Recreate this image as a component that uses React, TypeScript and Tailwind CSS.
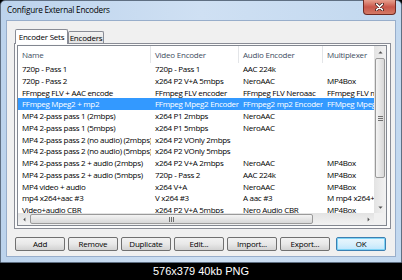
import React from 'react'
import clsx from 'clsx'

const rows = [
  ['720p - Pass 1', '720p - Pass 1', 'AAC 224k', ''],
  ['720p - Pass 2', 'x264 P2 V+A 5mbps', 'NeroAAC', 'MP4Box'],
  ['FFmpeg FLV + AAC encode', 'FFmpeg FLV encoder', 'FFmpeg FLV Neroaac', 'FFmpeg FLV mux'],
  ['FFmpeg Mpeg2 + mp2', 'FFmpeg Mpeg2 Encoder', 'FFmpeg2 mp2 Encoder', 'FFMpeg Mpeg2 mux'],
  ['MP4 2-pass pass 1 (2mbps)', 'x264 P1 2mbps', 'NeroAAC', ''],
  ['MP4 2-pass pass 1 (5mbps)', 'x264 P1 5mbps', 'NeroAAC', ''],
  ['MP4 2-pass pass 2 (no audio) (2mbps)', 'x264 P2 VOnly 2mbps', '', ''],
  ['MP4 2-pass pass 2 (no audio) (5mbps)', 'x264 P2 VOnly 5mbps', '', ''],
  ['MP4 2-pass pass 2 + audio (2mbps)', 'x264 P2 V+A 2mbps', 'NeroAAC', 'MP4Box'],
  ['MP4 2-pass pass 2 + audio (5mbps)', '720p - Pass 2', 'AAC 224k', 'MP4Box'],
  ['MP4 video + audio', 'x264 V+A', 'NeroAAC', 'MP4Box'],
  ['mp4 x264+aac #3', 'V x264 #3', 'A aac #3', 'M mp4 x264+aac'],
  ['Video+audio CBR', 'x264 P2 V+A 5mbps', 'Nero Audio CBR', 'MP4Box'],
]

const headers = ['Name', 'Video Encoder', 'Audio Encoder', 'Multiplexer']
const colW = ['w-[133px]', 'w-[88px]', 'w-[84px]', 'w-[90px]']
const buttons = ['Add', 'Remove', 'Duplicate', 'Edit...', 'Import...', 'Export...']

function Arrow({ dir }: { dir: 'up' | 'down' | 'left' | 'right' }) {
  const pts = {
    up: '0,4 3.5,0.5 7,4',
    down: '0,1 3.5,4.5 7,1',
    left: '4,0 0.5,3.5 4,7',
    right: '1,0 4.5,3.5 1,7',
  }[dir]
  const vert = dir === 'up' || dir === 'down'
  return (
    <div className="flex h-[12px] w-[12px] shrink-0 items-center justify-center">
      <svg width={vert ? 5 : 3} height={vert ? 3 : 5} viewBox={vert ? '0 0 7 5' : '0 0 5 7'}>
        <polygon points={pts} fill="#505050" />
      </svg>
    </div>
  )
}

export default function App() {
  return (
    <div className="flex h-[280px] w-[402px] flex-col bg-black font-['Open_Sans',sans-serif]">
      {/* window frame */}
      <div className="flex h-[263px] flex-col rounded-t-[5px] border border-[#5f6f82] bg-gradient-to-r from-[#bcd3ec] via-[#cfe0f3] to-[#c2d8ef] px-[5px] pb-[5px]">
        <div className="flex h-[19px] shrink-0 justify-between">
          <div className="pl-[1px] pt-[5px] text-[8.2px] leading-none tracking-[-0.2px] text-black">Configure External Encoders</div>
          <div className="-mt-px flex h-[15px] w-[33px] items-center justify-center rounded-b-[4px] border border-t-0 border-[#6e2a22] bg-gradient-to-b from-[#e6a08f] via-[#c8564a] to-[#d47a66]">
            <svg width="9" height="8" viewBox="0 0 9 8">
              <path d="M1.5 1.2 L7.5 6.8 M7.5 1.2 L1.5 6.8" stroke="#3d1410" strokeWidth="3" strokeLinecap="round" />
              <path d="M1.5 1.2 L7.5 6.8 M7.5 1.2 L1.5 6.8" stroke="#ffffff" strokeWidth="1.6" strokeLinecap="round" />
            </svg>
          </div>
        </div>

        {/* client area */}
        <div className="flex flex-1 flex-col border border-[#98aecb] bg-[#f0f0f0] text-[8px] leading-none tracking-[-0.22px]">
          {/* tabs */}
          <div className="relative z-10 mt-[8px] flex h-[14px] items-end pl-[8px]">
            <div className="-mb-px flex h-[15px] w-[53px] items-center justify-center rounded-t-[2px] border border-b-0 border-[#898c95] bg-white text-black">
              Encoder Sets
            </div>
            <div className="flex h-[12px] w-[36px] items-center justify-center rounded-t-[2px] border border-b-0 border-[#898c95] bg-gradient-to-b from-[#f2f2f2] to-[#e3e3e3] text-black">
              Encoders
            </div>
          </div>

          {/* tab panel */}
          <div className="ml-[7px] mr-[4px] flex h-[186px] flex-col border border-[#898c95] bg-[#fbfbfb] pb-[2px] pl-[2px] pr-[3px] pt-px">
            <div className="flex flex-1 flex-col border border-[#828790] bg-white">
              <div className="flex h-[167px]">
                <div className="flex-1 overflow-hidden">
                  <div className="flex h-[17px] items-center whitespace-nowrap text-[#3e4c5e]">
                    {headers.map((h, i) => (
                      <div key={h} className={clsx(colW[i], 'flex h-full shrink-0 items-center border-r border-[#e3e5e8] pl-[4px]')}>
                        {h}
                      </div>
                    ))}
                  </div>
                  {rows.map((r, ri) => (
                    <div
                      key={ri}
                      className={clsx(
                        'flex h-[11.75px] items-center whitespace-nowrap tracking-[-0.3px]',
                        ri === 3 ? 'bg-[#3399ff] text-white' : 'text-black'
                      )}
                    >
                      {r.map((c, ci) => (
                        <div key={ci} className={clsx(colW[ci], 'shrink-0 overflow-hidden pl-[4px] leading-[11.75px]')}>
                          {c}
                        </div>
                      ))}
                    </div>
                  ))}
                </div>
                {/* vertical scrollbar */}
                <div className="flex w-[12px] shrink-0 flex-col bg-gradient-to-r from-[#e3e3e3] to-[#f2f2f2]">
                  <Arrow dir="up" />
                  <div className="mx-px flex h-[120px] items-center justify-center rounded-[2px] border border-[#9a9a9a] bg-gradient-to-r from-[#f4f4f4] to-[#d8d8d8]">
                    <div className="flex flex-col gap-px">
                      <div className="h-px w-[5px] bg-[#707070]" />
                      <div className="h-px w-[5px] bg-[#707070]" />
                      <div className="h-px w-[5px] bg-[#707070]" />
                    </div>
                  </div>
                  <div className="flex-1" />
                  <Arrow dir="down" />
                </div>
              </div>
              {/* horizontal scrollbar */}
              <div className="flex h-[12px]">
                <div className="flex flex-1 bg-gradient-to-b from-[#e3e3e3] to-[#f2f2f2]">
                  <Arrow dir="left" />
                  <div className="my-px flex w-[283px] items-center justify-center rounded-[2px] border border-[#9a9a9a] bg-gradient-to-b from-[#f4f4f4] to-[#d8d8d8]">
                    <div className="flex gap-px">
                      <div className="h-[5px] w-px bg-[#707070]" />
                      <div className="h-[5px] w-px bg-[#707070]" />
                      <div className="h-[5px] w-px bg-[#707070]" />
                    </div>
                  </div>
                  <div className="flex-1" />
                  <Arrow dir="right" />
                </div>
                <div className="w-[12px] bg-[#f0f0f0]" />
              </div>
            </div>
          </div>

          {/* buttons */}
          <div className="mt-[8px] flex h-[14px] pl-[8px]">
            {buttons.map((b, i) => (
              <div
                key={b}
                className={clsx(
                  'flex h-[14px] w-[50px] items-center justify-center rounded-[2px] border border-[#707070] bg-gradient-to-b from-[#f2f2f2] via-[#e8e8e8] to-[#d2d2d2] text-black',
                  i > 0 && 'ml-[3px]'
                )}
              >
                {b}
              </div>
            ))}
            <div className="ml-[6px] flex h-[14px] w-[50px] items-center justify-center rounded-[2px] border border-[#3c7fb1] bg-gradient-to-b from-[#eaf6fd] via-[#d9f0fc] to-[#bee6fd] text-black shadow-[inset_0_0_0_1px_#7fd4f6]">
              OK
            </div>
          </div>
        </div>
      </div>

      <div className="flex flex-1 items-center justify-center font-['Liberation_Sans',sans-serif] text-[11px] leading-none text-white">
        576x379 40kb PNG
      </div>
    </div>
  )
}
